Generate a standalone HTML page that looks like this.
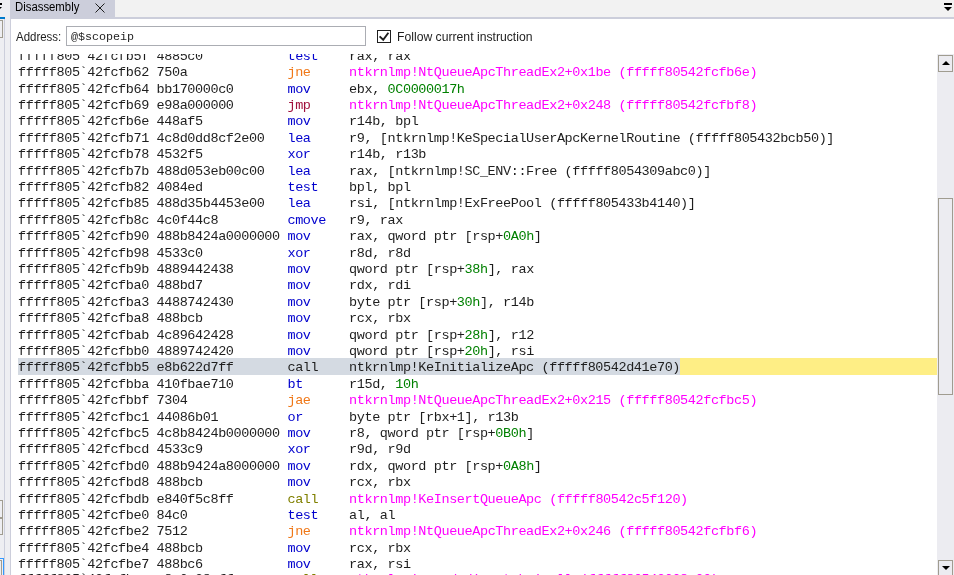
<!DOCTYPE html>
<html><head><meta charset="utf-8">
<style>
html,body{margin:0;padding:0;}
body{width:954px;height:575px;overflow:hidden;position:relative;background:#EEEEF2;font-family:"Liberation Sans",sans-serif;}
.abs{position:absolute;}
/* left strip */
#lstrip{left:0;top:0;width:10px;height:575px;background:#EEEEF2;}
#lline{left:4px;top:19px;width:1px;height:556px;background:#CCCEDB;}
#lblue{left:0;top:17px;width:5px;height:2px;background:#007ACC;}
/* tab well */
#well{left:10px;top:0;width:944px;height:17px;background:#F2F2F2;}
#wellline{left:10px;top:17px;width:944px;height:2px;background:#CCCEDB;}
#tab{left:10px;top:0;width:105px;height:19px;background:#CCCEDB;}
#tabtxt{left:15px;top:-1px;font-size:12.3px;transform:scaleX(0.923);transform-origin:0 0;color:#000;line-height:16px;white-space:pre;}
/* content */
#content{left:11px;top:19px;width:943px;height:556px;background:#FFFFFF;}
#cline{left:10px;top:19px;width:1px;height:556px;background:#CCCEDB;}
#addrlbl{left:16px;top:29px;font-size:12px;transform:scaleX(0.956);transform-origin:0 0;line-height:16px;color:#1E1E1E;white-space:pre;}
#addrbox{left:66px;top:26px;width:298px;height:18px;border:1px solid #ABADB3;background:#fff;}
#addrtxt{left:71px;top:29px;font-family:"Liberation Mono",monospace;font-size:11.7px;line-height:16px;color:#1E1E1E;white-space:pre;}
#chk{left:377px;top:30px;width:12px;height:11px;border:1px solid #1E1E1E;background:#fff;}
#chklbl{left:397px;top:29px;font-size:12.2px;line-height:16px;color:#1E1E1E;white-space:pre;}
/* code */
#code{left:11px;top:54px;width:926px;height:521px;overflow:hidden;}
.r{position:absolute;left:7px;height:16.4px;line-height:19.2px;font-family:"Liberation Mono",monospace;font-size:13.5px;letter-spacing:-0.403px;white-space:pre;color:#1E1E1E;}
.r.cur{}
.hl{}
.m{color:#0000CD;}
.j{color:#F07818;}
.p{color:#A0103C;}
.c{color:#808000;}
.s{color:#FF00FF;}
.n{color:#008000;}
/* scrollbar */
#sb{left:937px;top:54px;width:17px;height:521px;background:#ECECF1;}
.sbb{position:absolute;left:938px;width:13px;border:1px solid #A09C90;background:#ECECF1;}
</style></head>
<body>
<div id="wrap" style="position:absolute;left:0;top:0;width:954px;height:575px;overflow:hidden;will-change:transform;background:#EEEEF2;">
<div id="lstrip" class="abs"></div>
<div id="lline" class="abs"></div>
<div id="lblue" class="abs"></div>
<svg class="abs" style="left:-6px;top:0" width="10" height="14"><rect x="0" y="3" width="8" height="2" fill="#000"/><path d="M0 7 L8 7 L4 11 Z" fill="#000"/></svg>
<div class="abs" style="left:-11px;top:20px;width:12px;height:16px;border:1px solid #A09C90;"></div>
<div class="abs" style="left:-11px;top:500px;width:12px;height:16px;border:1px solid #A09C90;"></div>
<div class="abs" style="left:-11px;top:518px;width:12px;height:15px;border:1px solid #A09C90;"></div>
<div class="abs" style="left:-10px;top:558px;width:12px;height:20px;border:1px solid #3399FF;"></div>
<div class="abs" style="left:-12px;top:560px;width:12px;height:20px;border:1px solid #A09C90;"></div>

<div id="well" class="abs"></div>
<div id="wellline" class="abs"></div>
<div id="tab" class="abs"></div>
<div id="tabtxt" class="abs">Disassembly</div>
<svg class="abs" style="left:95px;top:3px" width="11" height="11"><path d="M0.5 0.5 L9.5 9.5 M9.5 0.5 L0.5 9.5" stroke="#1E1E1E" stroke-width="1.0"/></svg>
<svg class="abs" style="left:940px;top:0" width="14" height="14"><rect x="4" y="3" width="8" height="2" fill="#000"/><path d="M4 7 L12 7 L8 11 Z" fill="#000"/></svg>

<div id="content" class="abs"></div>
<div id="cline" class="abs"></div>
<div id="addrlbl" class="abs">Address:</div>
<div id="addrbox" class="abs"></div>
<div id="addrtxt" class="abs">@$scopeip</div>
<div id="chk" class="abs"></div>
<svg class="abs" style="left:377px;top:30px" width="14" height="13"><path d="M2.6 6.4 L6.2 9.8 L11.4 2.8" stroke="#1E1E1E" stroke-width="1.9" fill="none"/></svg>
<div id="chklbl" class="abs">Follow current instruction</div>

<div class="abs" style="left:18px;top:358px;width:919px;height:17px;background:#FEEE85;"></div>
<div class="abs" style="left:18px;top:358px;width:662px;height:17px;background:#D4DAE2;"></div>
<div id="code" class="abs">
<div class="r" style="top:-7.00px">fffff805`42fcfb5f 4885c0           <span class="m">test</span>    rax, rax</div>
<div class="r" style="top:9.00px">fffff805`42fcfb62 750a             <span class="j">jne</span>     <span class="s">ntkrnlmp!NtQueueApcThreadEx2+0x1be (fffff80542fcfb6e)</span></div>
<div class="r" style="top:26.00px">fffff805`42fcfb64 bb170000c0       <span class="m">mov</span>     ebx, <span class="n">0C0000017h</span></div>
<div class="r" style="top:42.00px">fffff805`42fcfb69 e98a000000       <span class="p">jmp</span>     <span class="s">ntkrnlmp!NtQueueApcThreadEx2+0x248 (fffff80542fcfbf8)</span></div>
<div class="r" style="top:58.00px">fffff805`42fcfb6e 448af5           <span class="m">mov</span>     r14b, bpl</div>
<div class="r" style="top:75.00px">fffff805`42fcfb71 4c8d0dd8cf2e00   <span class="m">lea</span>     r9, [ntkrnlmp!KeSpecialUserApcKernelRoutine (fffff805432bcb50)]</div>
<div class="r" style="top:91.00px">fffff805`42fcfb78 4532f5           <span class="m">xor</span>     r14b, r13b</div>
<div class="r" style="top:108.00px">fffff805`42fcfb7b 488d053eb00c00   <span class="m">lea</span>     rax, [ntkrnlmp!SC_ENV::Free (fffff8054309abc0)]</div>
<div class="r" style="top:124.00px">fffff805`42fcfb82 4084ed           <span class="m">test</span>    bpl, bpl</div>
<div class="r" style="top:140.00px">fffff805`42fcfb85 488d35b4453e00   <span class="m">lea</span>     rsi, [ntkrnlmp!ExFreePool (fffff805433b4140)]</div>
<div class="r" style="top:157.00px">fffff805`42fcfb8c 4c0f44c8         <span class="m">cmove</span>   r9, rax</div>
<div class="r" style="top:173.00px">fffff805`42fcfb90 488b8424a0000000 <span class="m">mov</span>     rax, qword ptr [rsp+<span class="n">0A0h</span>]</div>
<div class="r" style="top:190.00px">fffff805`42fcfb98 4533c0           <span class="m">xor</span>     r8d, r8d</div>
<div class="r" style="top:206.00px">fffff805`42fcfb9b 4889442438       <span class="m">mov</span>     qword ptr [rsp+<span class="n">38h</span>], rax</div>
<div class="r" style="top:222.00px">fffff805`42fcfba0 488bd7           <span class="m">mov</span>     rdx, rdi</div>
<div class="r" style="top:239.00px">fffff805`42fcfba3 4488742430       <span class="m">mov</span>     byte ptr [rsp+<span class="n">30h</span>], r14b</div>
<div class="r" style="top:255.00px">fffff805`42fcfba8 488bcb           <span class="m">mov</span>     rcx, rbx</div>
<div class="r" style="top:272.00px">fffff805`42fcfbab 4c89642428       <span class="m">mov</span>     qword ptr [rsp+<span class="n">28h</span>], r12</div>
<div class="r" style="top:288.00px">fffff805`42fcfbb0 4889742420       <span class="m">mov</span>     qword ptr [rsp+<span class="n">20h</span>], rsi</div>
<div class="r cur" style="top:304.00px"><span class="hl">fffff805`42fcfbb5 e8b622d7ff       call    ntkrnlmp!KeInitializeApc (fffff80542d41e70)</span></div>
<div class="r" style="top:321.00px">fffff805`42fcfbba 410fbae710       <span class="m">bt</span>      r15d, <span class="n">10h</span></div>
<div class="r" style="top:337.00px">fffff805`42fcfbbf 7304             <span class="j">jae</span>     <span class="s">ntkrnlmp!NtQueueApcThreadEx2+0x215 (fffff80542fcfbc5)</span></div>
<div class="r" style="top:354.00px">fffff805`42fcfbc1 44086b01         <span class="m">or</span>      byte ptr [rbx+1], r13b</div>
<div class="r" style="top:370.00px">fffff805`42fcfbc5 4c8b8424b0000000 <span class="m">mov</span>     r8, qword ptr [rsp+<span class="n">0B0h</span>]</div>
<div class="r" style="top:386.00px">fffff805`42fcfbcd 4533c9           <span class="m">xor</span>     r9d, r9d</div>
<div class="r" style="top:403.00px">fffff805`42fcfbd0 488b9424a8000000 <span class="m">mov</span>     rdx, qword ptr [rsp+<span class="n">0A8h</span>]</div>
<div class="r" style="top:419.00px">fffff805`42fcfbd8 488bcb           <span class="m">mov</span>     rcx, rbx</div>
<div class="r" style="top:436.00px">fffff805`42fcfbdb e840f5c8ff       <span class="c">call</span>    <span class="s">ntkrnlmp!KeInsertQueueApc (fffff80542c5f120)</span></div>
<div class="r" style="top:452.00px">fffff805`42fcfbe0 84c0             <span class="m">test</span>    al, al</div>
<div class="r" style="top:468.00px">fffff805`42fcfbe2 7512             <span class="j">jne</span>     <span class="s">ntkrnlmp!NtQueueApcThreadEx2+0x246 (fffff80542fcfbf6)</span></div>
<div class="r" style="top:485.00px">fffff805`42fcfbe4 488bcb           <span class="m">mov</span>     rcx, rbx</div>
<div class="r" style="top:501.00px">fffff805`42fcfbe7 488bc6           <span class="m">mov</span>     rax, rsi</div>
<div class="r" style="top:516.00px">fffff805`42fcfbea e8a0e38cff       <span class="c">call</span>    <span class="s">ntkrnlmp!guard_dispatch_icall (fffff80543008a00)</span></div>
</div>

<div id="sb" class="abs"></div>
<div class="sbb" style="top:55px;height:15px;"></div>
<svg class="abs" style="left:938px;top:55px" width="15" height="17"><path d="M4 10 L12 10 L8 6 Z" fill="#000"/></svg>
<div class="sbb" style="top:198px;height:195px;"></div>
<div class="sbb" style="top:560px;height:15px;"></div>
<svg class="abs" style="left:938px;top:560px" width="15" height="15"><path d="M4 6 L12 6 L8 10 Z" fill="#000"/></svg>
</div>
</body></html>
